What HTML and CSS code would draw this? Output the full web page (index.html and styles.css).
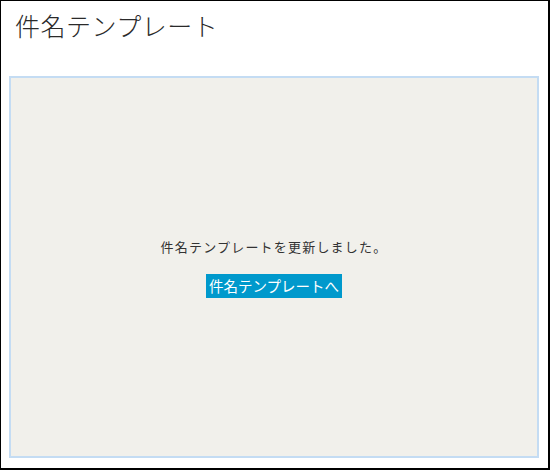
FILE: index.html
```html
<!DOCTYPE html>
<html lang="ja">
<head>
<meta charset="utf-8">
<title>件名テンプレート</title>
<link rel="stylesheet" href="styles.css">
</head>
<body>
<div class="frame">
  <h1 class="title">件名テンプレート</h1>
  <div class="panel">
    <p class="message">件名テンプレートを更新しました。</p>
    <a class="button" href="#">件名テンプレートへ</a>
  </div>
</div>
</body>
</html>
```

FILE: styles.css
```css
html, body {
  margin: 0;
  padding: 0;
  background: #fff;
}
.frame {
  box-sizing: border-box;
  width: 550px;
  height: 470px;
  border: 1px solid #000;
  border-right-width: 2px;
  border-bottom-width: 2px;
  display: flex;
  flex-direction: column;
  font-family: "Noto Sans CJK JP", "Noto Sans", sans-serif;
  color: #333;
}
.title {
  margin: 0;
  padding: 6px 0 0 14px;
  height: 75px;
  box-sizing: border-box;
  font-size: 25px;
  font-weight: 300;
  letter-spacing: 0.5px;
  line-height: 36px;
  color: #2a2a2a;
}
.panel {
  flex: 1;
  margin: 0 9px 10px 8px;
  border: 2px solid #c4dcf3;
  background: #f1f0eb;
  display: flex;
  flex-direction: column;
  align-items: center;
  justify-content: center;
}
.message {
  margin: 0 0 17px;
  font-size: 13px;
  letter-spacing: 1.2px;
  line-height: 20px;
  color: #333;
}
.button {
  display: block;
  background: #0099cc;
  color: #fff;
  text-decoration: none;
  font-size: 14.5px;
  line-height: 24px;
  padding: 0 3px;
}
```
